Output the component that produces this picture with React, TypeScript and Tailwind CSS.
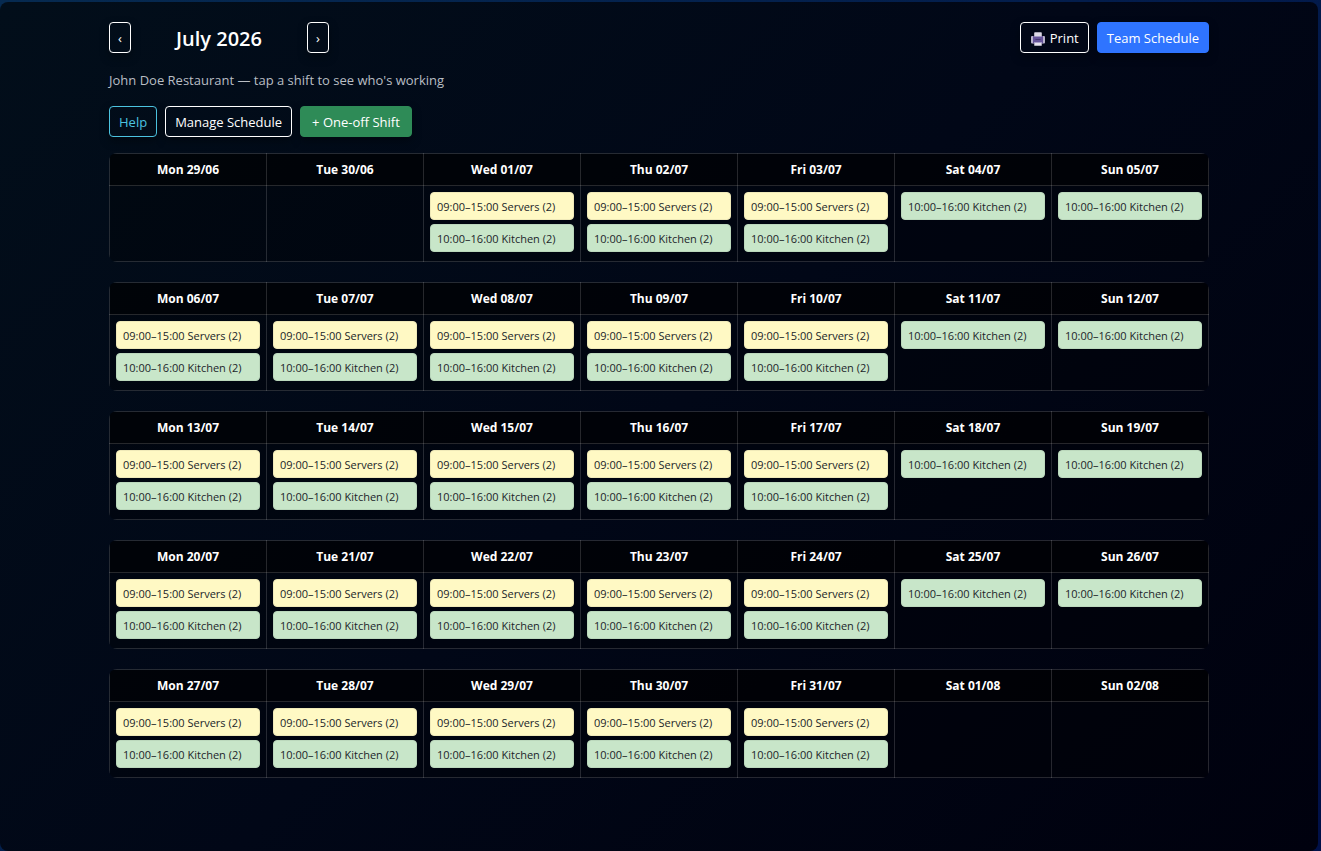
import clsx from "clsx";
import {ComponentPropsWithoutRef} from "react";

type ShiftKind = "servers" | "kitchen";

interface Day {
    label: string;
    shifts: ShiftKind[];
}

const weekdays = ["Mon", "Tue", "Wed", "Thu", "Fri", "Sat", "Sun"];

const shiftInfo = {
    servers: {label: "09:00–15:00 Servers (2)", className: "bg-[#fff9c4] border-[#efe9b8]"},
    kitchen: {label: "10:00–16:00 Kitchen (2)", className: "bg-[#c8e6c9] border-[#bbd8bc]"},
};

const pad = (n: number) => String(n).padStart(2, "0");

// Monday 29 June is the first cell of the July 2026 calendar
const weeks: Day[][] = Array.from({length: 5}, (_, week) =>
    weekdays.map((name, index) => {
        const date = new Date(2026, 5, 29 + week * 7 + index);
        const inMonth = date.getMonth() === 6;
        const shifts: ShiftKind[] = index < 5 ? ["servers", "kitchen"] : ["kitchen"];

        return {
            label: `${name} ${pad(date.getDate())}/${pad(date.getMonth() + 1)}`,
            shifts: inMonth ? shifts : [],
        };
    })
);

const Button = ({className, ...props}: ComponentPropsWithoutRef<"button">) => (
    <button
        type="button"
        className={clsx(
            "inline-flex h-[31px] items-center justify-center rounded border pt-0.5 text-[13px] whitespace-nowrap shadow-[0_4px_10px_rgba(0,0,0,0.35)] cursor-pointer",
            className
        )}
        {...props}
    />
);

const PrinterIcon = () => (
    <svg viewBox="0 0 16 16" className="size-4" aria-hidden="true">
        <path d="M1 6a1 1 0 0 1 1-1h12a1 1 0 0 1 1 1v5.4a1 1 0 0 1-1 1H2a1 1 0 0 1-1-1z" fill="#b9b3cd" />
        <path d="M3 5h10v7.4H3z" fill="#65549a" />
        <path d="M5 1.2h6a.8.8 0 0 1 .8.8v3.4H4.2V2a.8.8 0 0 1 .8-.8z" fill="#dcd9e7" />
        <path d="M5.4 8h5.2v.9H5.4z" fill="#43356f" />
        <path d="M4.6 11h6.8l.4 3a.6.6 0 0 1-.6.8H4.8a.6.6 0 0 1-.6-.8z" fill="#e6e3ee" />
        <path d="M4.6 11h6.8l.1 1H4.5z" fill="#a79dc8" />
    </svg>
);

const WeekTable = ({days}: {days: Day[]}) => (
    <div className="overflow-hidden rounded-lg bg-black/30">
        <table className="w-full table-fixed border-collapse">
            <thead>
                <tr>
                    {days.map((day) => (
                        <th
                            key={day.label}
                            scope="col"
                            className="h-8 border border-white/15 bg-black/50 p-0 text-[12px] leading-4 font-bold"
                        >
                            {day.label}
                        </th>
                    ))}
                </tr>
            </thead>
            <tbody>
                <tr>
                    {days.map((day) => (
                        <td key={day.label} className="h-[76px] border border-white/15 p-1.5 align-top">
                            <div className="flex flex-col gap-1">
                                {day.shifts.map((shift) => (
                                    <button
                                        key={shift}
                                        type="button"
                                        className={clsx(
                                            "h-7 w-full truncate rounded border px-1.5 pt-px text-left text-[11px] leading-4 text-[#212529] cursor-pointer",
                                            shiftInfo[shift].className
                                        )}
                                    >
                                        {shiftInfo[shift].label}
                                    </button>
                                ))}
                            </div>
                        </td>
                    ))}
                </tr>
            </tbody>
        </table>
    </div>
);

export default function App() {
    return (
        <div className="min-h-screen bg-[linear-gradient(135deg,#062a50,#001048)] pt-0.5 pr-[3px] font-['Open_Sans','Noto_Sans',sans-serif] text-white">
            <main className="min-h-[calc(100vh-2px)] rounded-lg bg-[linear-gradient(135deg,#020e1a,#010717_50%,#00010e)] px-6 pt-5 pb-12">
                <div className="mx-auto max-w-[1100px]">
                    <header className="flex items-center justify-between">
                        <div className="flex items-center gap-2">
                            <Button className="w-[22px] border-white" aria-label="Previous month">‹</Button>
                            <h1 className="w-40 pt-0.5 text-center text-[20px] leading-6 font-semibold">July 2026</h1>
                            <Button className="w-[22px] border-white" aria-label="Next month">›</Button>
                        </div>
                        <div className="flex gap-2">
                            <Button className="gap-1 border-white px-[9px]">
                                <PrinterIcon />
                                Print
                            </Button>
                            <Button className="border-[#2f74ff] bg-[#2f74ff] px-[9px]">Team Schedule</Button>
                        </div>
                    </header>

                    <p className="mt-4 pt-px text-[13px] leading-5 text-[#b9bec4]">
                        John Doe Restaurant — tap a shift to see who's working
                    </p>

                    <div className="mt-4 flex gap-2">
                        <Button className="border-[#4cc3e0] px-[9px] text-[#4cc3e0]">Help</Button>
                        <Button className="border-white px-[9px]">Manage Schedule</Button>
                        <Button className="border-[#2e8b57] bg-[#2e8b57] px-[11px]">+ One-off Shift</Button>
                    </div>

                    <div className="mt-4 flex flex-col gap-5">
                        {weeks.map((days) => (
                            <WeekTable key={days[0].label} days={days} />
                        ))}
                    </div>
                </div>
            </main>
        </div>
    );
}
